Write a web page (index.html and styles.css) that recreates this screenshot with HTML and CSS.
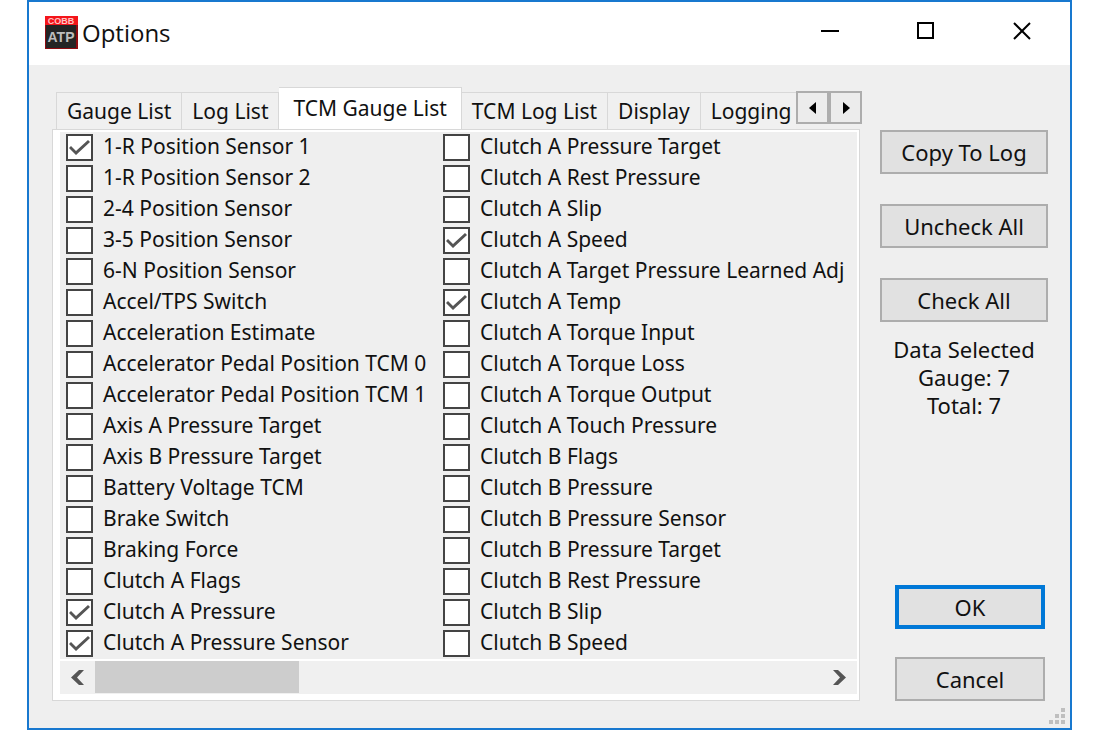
FILE: index.html
```
<!DOCTYPE html>
<html lang="en">
<head>
  <meta charset="UTF-8" />
  <meta name="viewport" content="width=device-width, initial-scale=1.0"/>
  <title>Options</title>
  <link rel="stylesheet" href="styles.css">
</head>
<body>

<div class="window">
  <!-- Title bar -->
  <header class="titlebar">
    <svg class="app-icon" viewBox="0 0 33 33" aria-hidden="true">
      <rect width="33" height="33" fill="#8d0b10"/>
      <rect x="1" y="9" width="30" height="23" fill="#242424"/>
      <rect width="33" height="9" fill="#f4151a"/>
      <text class="icon-brand" x="16" y="8" text-anchor="middle">COBB</text>
      <text class="icon-name" x="16" y="26" text-anchor="middle">ATP</text>
    </svg>
    <h1>Options</h1>
    <div class="window-controls">
      <button type="button" aria-label="Minimize">
        <svg viewBox="0 0 18 18"><path d="M0 9h18"/></svg>
      </button>
      <button type="button" aria-label="Maximize">
        <svg viewBox="0 0 18 18"><path d="M1 1h15v15H1z"/></svg>
      </button>
      <button type="button" aria-label="Close">
        <svg viewBox="0 0 18 18"><path d="M1 1l16 16M17 1L1 17"/></svg>
      </button>
    </div>
  </header>

  <main class="content">
    <section class="tab-control">
      <div class="tab-row">
        <div class="tabs" role="tablist">
          <button type="button" role="tab">Gauge List</button>
          <button type="button" role="tab">Log List</button>
          <button type="button" role="tab" class="active" aria-selected="true">TCM Gauge List</button>
          <button type="button" role="tab">TCM Log List</button>
          <button type="button" role="tab">Display</button>
          <button type="button" role="tab">Logging</button>
        </div>
        <div class="tab-scroll">
          <button type="button" aria-label="Previous tabs"><svg viewBox="0 0 8 12"><path d="M7 0v12L0 6z"/></svg></button>
          <button type="button" aria-label="Next tabs"><svg viewBox="0 0 8 12"><path d="M1 0v12l7-6z"/></svg></button>
        </div>
      </div>

      <div class="panel" role="tabpanel">
        <div class="list">
          <label><input type="checkbox" checked>1-R Position Sensor 1</label>
          <label><input type="checkbox">1-R Position Sensor 2</label>
          <label><input type="checkbox">2-4 Position Sensor</label>
          <label><input type="checkbox">3-5 Position Sensor</label>
          <label><input type="checkbox">6-N Position Sensor</label>
          <label><input type="checkbox">Accel/TPS Switch</label>
          <label><input type="checkbox">Acceleration Estimate</label>
          <label><input type="checkbox">Accelerator Pedal Position TCM 0</label>
          <label><input type="checkbox">Accelerator Pedal Position TCM 1</label>
          <label><input type="checkbox">Axis A Pressure Target</label>
          <label><input type="checkbox">Axis B Pressure Target</label>
          <label><input type="checkbox">Battery Voltage TCM</label>
          <label><input type="checkbox">Brake Switch</label>
          <label><input type="checkbox">Braking Force</label>
          <label><input type="checkbox">Clutch A Flags</label>
          <label><input type="checkbox" checked>Clutch A Pressure</label>
          <label><input type="checkbox" checked>Clutch A Pressure Sensor</label>
          <label><input type="checkbox">Clutch A Pressure Target</label>
          <label><input type="checkbox">Clutch A Rest Pressure</label>
          <label><input type="checkbox">Clutch A Slip</label>
          <label><input type="checkbox" checked>Clutch A Speed</label>
          <label><input type="checkbox">Clutch A Target Pressure Learned Adj</label>
          <label><input type="checkbox" checked>Clutch A Temp</label>
          <label><input type="checkbox">Clutch A Torque Input</label>
          <label><input type="checkbox">Clutch A Torque Loss</label>
          <label><input type="checkbox">Clutch A Torque Output</label>
          <label><input type="checkbox">Clutch A Touch Pressure</label>
          <label><input type="checkbox">Clutch B Flags</label>
          <label><input type="checkbox">Clutch B Pressure</label>
          <label><input type="checkbox">Clutch B Pressure Sensor</label>
          <label><input type="checkbox">Clutch B Pressure Target</label>
          <label><input type="checkbox">Clutch B Rest Pressure</label>
          <label><input type="checkbox">Clutch B Slip</label>
          <label><input type="checkbox">Clutch B Speed</label>
        </div>
        <div class="scrollbar">
          <button type="button" aria-label="Scroll left"><svg viewBox="0 0 13 15"><path d="M8 0h5L6 7.500l7 7.500H8L0 7.500z"/></svg></button>
          <div class="track"><div class="thumb"></div></div>
          <button type="button" aria-label="Scroll right"><svg viewBox="0 0 13 15"><path d="M5 0H0l7 7.500L0 15h5l8-7.500z"/></svg></button>
        </div>
      </div>
    </section>

    <aside class="side">
      <button type="button" class="btn">Copy To Log</button>
      <button type="button" class="btn">Uncheck All</button>
      <button type="button" class="btn">Check All</button>
      <p class="summary">Data Selected<br>Gauge: 7<br>Total: 7</p>
      <div class="dialog-buttons">
        <button type="button" class="btn primary">OK</button>
        <button type="button" class="btn">Cancel</button>
      </div>
    </aside>
  </main>

  <svg class="grip" viewBox="0 0 17 17" aria-hidden="true">
    <path d="M13 0h4v4h-4zM7 6h4v4H7zM13 6h4v4h-4zM1 12h4v4H1zM7 12h4v4H7zM13 12h4v4h-4z"/>
  </svg>
</div>

</body>
</html>
```
FILE: styles.css
```
* {
  box-sizing: border-box;
}

body {
  margin: 0;
  background: #fff;
  color: #111;
  font-family: "Noto Sans", sans-serif;
  font-size: 21px;
}

button {
  font: inherit;
  color: inherit;
  padding: 0;
}

.window {
  position: relative;
  display: flex;
  flex-direction: column;
  min-height: 100vh;
  margin: 0 28px 0 27px;
  border: 2px solid #1878cf;
  background: #efefef;
}

/* Title bar */
.titlebar {
  display: flex;
  align-items: center;
  height: 63px;
  padding: 0 0 2px 16px;
  background: #fff;
}

.app-icon {
  width: 33px;
  height: 33px;
}

.icon-brand {
  font: bold 9px "Liberation Sans", sans-serif;
  fill: #ffc4c4;
}

.icon-name {
  font: bold 14px "Liberation Sans", sans-serif;
  fill: #bdbdbd;
}

h1 {
  margin: 0 auto 0 4px;
  font-family: "Open Sans", sans-serif;
  font-size: 24px;
  font-weight: 400;
}

.window-controls {
  display: flex;
  align-self: flex-start;
}

.window-controls button {
  display: grid;
  place-items: center;
  width: 96px;
  height: 58px;
  border: none;
  background: none;
}

.window-controls svg {
  width: 18px;
  height: 18px;
  fill: none;
  stroke: #000;
  stroke-width: 2;
}

/* Tabs */
.content {
  display: flex;
  flex: 1;
  gap: 20px;
  padding: 22px 22px 27px 23px;
}

.tab-control {
  display: flex;
  flex: 1;
  flex-direction: column;
  min-width: 0;
}

.tab-row {
  display: flex;
  align-items: flex-start;
  height: 42px;
}

.tabs {
  display: flex;
  flex: 1;
  align-items: flex-end;
  height: 42px;
  padding-left: 4px;
  overflow: hidden;
}

.tabs button {
  flex: none;
  height: 37px;
  padding: 0 10px;
  border: 1px solid #d8d8d8;
  border-width: 1px 1px 0 0;
  background: #f0f0f0;
  white-space: nowrap;
}

.tabs button:first-child {
  border-left-width: 1px;
}

.tabs .active {
  height: 42px;
  padding: 0 14px 2px;
  background: #fff;
}

.tab-scroll {
  display: flex;
  margin: 4px -2px 0 0;
}

.tab-scroll button {
  display: grid;
  place-items: center;
  width: 33px;
  height: 33px;
  border: 2px solid #adadad;
  background: #ececec;
}

.tab-scroll svg {
  width: 8px;
  height: 12px;
}

/* Gauge list */
.panel {
  display: flex;
  flex: 1;
  flex-direction: column;
  padding: 2px 2px 6px 7px;
  border: 1px solid #d8d8d8;
  background: #fff;
}

.list {
  display: grid;
  flex: 1;
  grid-template-rows: repeat(17, 31px);
  grid-template-columns: 377px 1fr;
  grid-auto-flow: column;
  padding-left: 6px;
  background: #efefef;
}

.list label {
  display: flex;
  align-items: center;
  gap: 10px;
  padding-bottom: 4px;
  white-space: nowrap;
}

.list input {
  display: grid;
  flex: none;
  place-items: center;
  width: 27px;
  height: 27px;
  margin: 4px 0 0;
  appearance: none;
  border: 2px solid #444;
  background: #fff;
}

.list input:checked::after {
  content: "";
  width: 21px;
  height: 15px;
  background: #555;
  clip-path: polygon(0 8px, 2px 6px, 7px 11px, 19px 0, 21px 2px, 7px 15px);
}

.scrollbar {
  display: flex;
  height: 33px;
  margin-top: 2px;
  background: #f0f0f0;
}

.scrollbar button {
  display: grid;
  place-items: center;
  width: 35px;
  border: none;
  background: none;
}

.scrollbar svg {
  width: 13px;
  height: 15px;
  fill: #555;
}

.track {
  flex: 1;
}

.thumb {
  width: 28%;
  height: 32px;
  background: #cdcdcd;
}

/* Side buttons */
.side {
  display: flex;
  flex-direction: column;
  gap: 30px;
  width: 168px;
  padding-top: 43px;
  font-size: 22px;
}

.btn {
  height: 44px;
  border: 2px solid #adadad;
  background: #e1e1e1;
}

.summary {
  margin: -17px 0 0;
  line-height: 28px;
  text-align: center;
}

.dialog-buttons {
  display: flex;
  flex-direction: column;
  gap: 28px;
  margin: auto 3px 0 15px;
}

.primary {
  border: 4px solid #0078d7;
}

.grip {
  position: absolute;
  right: 5px;
  bottom: 3px;
  width: 17px;
  height: 17px;
  fill: #bfbfbf;
}
```
